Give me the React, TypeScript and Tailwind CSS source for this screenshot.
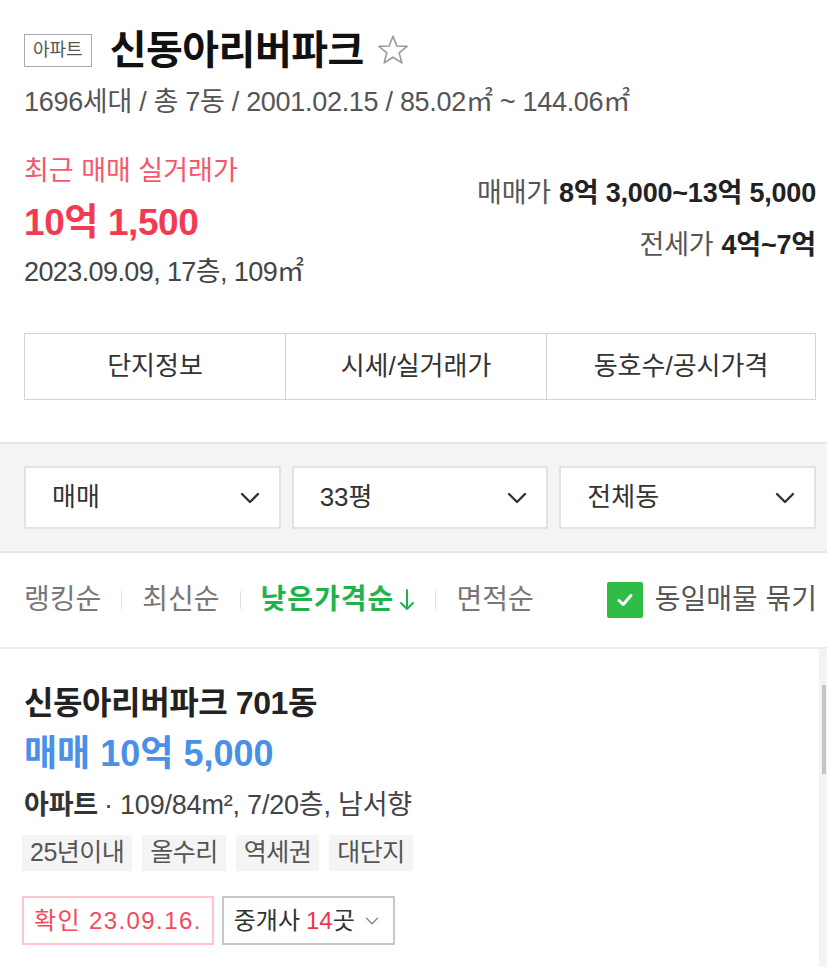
import { ChevronDown } from "lucide-react";

const FONT = "font-[family-name:'Liberation_Sans','Noto_Sans_CJK_KR',sans-serif]";

function StarIcon() {
  return (
    <svg width="36" height="36" viewBox="0 0 24 24" fill="none" stroke="#9a9a9a" strokeWidth="1.1" strokeLinejoin="round">
      <path d="M12 2.8 L14.6 9.3 L21.4 9.6 L16.1 13.9 L17.9 20.6 L12 16.8 L6.1 20.6 L7.9 13.9 L2.6 9.6 L9.4 9.3 Z" />
    </svg>
  );
}

function Chevron() {
  return (
    <svg width="22" height="14" viewBox="0 0 22 14" fill="none" stroke="#333" strokeWidth="2.4" strokeLinecap="round" strokeLinejoin="round">
      <path d="M3 3 L11 11 L19 3" />
    </svg>
  );
}

function Sep() {
  return <span className="mx-[20px] h-[18px] w-px bg-[#e0e0e0]" />;
}

const tags = ["25년이내", "올수리", "역세권", "대단지"];

export default function App() {
  return (
    <div className={`w-[827px] h-[967px] overflow-hidden bg-white text-[#333] ${FONT}`}>
      {/* Header */}
      <section className="pl-[24px] pr-[11px] pt-[30px]">
        <div className="flex h-[40px] items-center">
          <span className="flex h-[33px] items-center border border-[#a8a8a8] px-[8px] text-[18px] text-[#555]">
            아파트
          </span>
          <h1 className="ml-[18px] text-[40px] font-semibold leading-none text-[#111] tracking-[-0.5px]">신동아리버파크</h1>
          <span className="ml-[11px] flex items-center">
            <StarIcon />
          </span>
        </div>
        <div className="mt-[17px] flex h-[30px] items-center text-[27px] text-[#555] tracking-[-0.3px]">
          1696세대 / 총 7동 / 2001.02.15 / 85.02㎡ ~ 144.06㎡
        </div>

        <div className="mt-[38px] flex justify-between">
          <div className="flex flex-col">
            <div className="flex h-[32px] items-center text-[27px] text-[#f4586c]">최근 매매 실거래가</div>
            <div className="mt-[14px] flex h-[44px] items-center text-[37px] font-bold text-[#f23a52] tracking-[-0.4px]">
              10억 1,500
            </div>
            <div className="mt-[12px] flex h-[30px] items-center text-[27px] text-[#444] tracking-[-0.6px]">
              2023.09.09, 17층, 109㎡
            </div>
          </div>
          <div className="flex flex-col items-end pt-[22px] text-[27px] tracking-[-0.2px]">
            <div className="flex h-[32px] items-center">
              <span className="text-[#555]">매매가</span>
              <span className="ml-[8px] font-bold text-[#222]">8억 3,000~13억 5,000</span>
            </div>
            <div className="mt-[20px] flex h-[32px] items-center">
              <span className="text-[#555]">전세가</span>
              <span className="ml-[8px] font-bold text-[#222]">4억~7억</span>
            </div>
          </div>
        </div>

        <div className="mt-[46px] flex h-[67px] border border-[#d4d4d4] text-[26px] text-[#333]">
          <div className="flex w-[261px] items-center justify-center border-r border-[#d4d4d4]">단지정보</div>
          <div className="flex w-[261px] items-center justify-center border-r border-[#d4d4d4]">시세/실거래가</div>
          <div className="flex flex-1 items-center justify-center">동호수/공시가격</div>
        </div>
      </section>

      {/* Filters */}
      <section className="mt-[42px] border-y-2 border-[#e6e6e6] bg-[#f4f4f4] pl-[24px] pr-[11px] py-[22px]">
        <div className="grid grid-cols-3 gap-[11px]">
          {["매매", "33평", "전체동"].map((label) => (
            <div
              key={label}
              className="flex h-[63px] items-center justify-between border-2 border-[#e3e3e3] bg-white pl-[26px] pr-[18px] text-[26px] text-[#333]"
            >
              <span>{label}</span>
              <Chevron />
            </div>
          ))}
        </div>
      </section>

      {/* Sort */}
      <section className="flex h-[94px] items-center justify-between pl-[24px] pr-[10px] text-[28px]">
        <div className="flex items-center text-[#777]">
          <span>랭킹순</span>
          <Sep />
          <span>최신순</span>
          <Sep />
          <span className="flex items-center font-bold text-[#20b34a] tracking-[1px]">
            낮은가격순
            <svg className="ml-[5px]" width="16" height="24" viewBox="0 0 16 24" fill="none" stroke="#20b34a" strokeWidth="2" strokeLinecap="round" strokeLinejoin="round">
              <path d="M8 2 V21 M2 15 L8 21 L14 15" />
            </svg>
          </span>
          <Sep />
          <span>면적순</span>
        </div>
        <div className="flex items-center">
          <span className="flex h-[36px] w-[36px] items-center justify-center rounded-[2px] bg-[#2fbd48]">
            <svg width="22" height="22" viewBox="0 0 22 22" fill="none" stroke="#fff" strokeWidth="3" strokeLinecap="round" strokeLinejoin="round">
              <path d="M5 11.5 L9.2 15.5 L17 6.5" />
            </svg>
          </span>
          <span className="ml-[12px] text-[#555]">동일매물 묶기</span>
        </div>
      </section>

      {/* Listing */}
      <section className="flex h-[320px] border-t-2 border-[#ececec]">
        <div className="flex-1 pl-[24px] pt-[36px]">
          <div className="flex h-[36px] items-center text-[32px] font-bold text-[#222] tracking-[-0.4px]">
            신동아리버파크 701동
          </div>
          <div className="mt-[13px] flex h-[40px] items-center text-[36px] font-bold text-[#4a8fe8]">
            매매 10억 5,000
          </div>
          <div className="mt-[15px] flex h-[32px] items-center text-[27px] text-[#444] tracking-[-0.2px]">
            <span className="font-bold text-[#333]">아파트</span>
            <span className="ml-[6px]">· 109/84m², 7/20층, 남서향</span>
          </div>
          <div className="-ml-[2px] mt-[14px] flex gap-[10px]">
            {tags.map((t) => (
              <span key={t} className="flex h-[36px] items-center bg-[#f4f4f4] px-[8px] text-[25px] text-[#555] tracking-[-0.5px]">
                {t}
              </span>
            ))}
          </div>
          <div className="-ml-[2px] mt-[25px] flex gap-[8px]">
            <span className="flex h-[49px] items-center border-2 border-[#ffc4cc] px-[10px] text-[24px] text-[#f4485e] tracking-[1.4px]">
              확인 23.09.16.
            </span>
            <span className="flex h-[49px] items-center border-2 border-[#c8c8c8] px-[10px] text-[24px] text-[#333]">
              중개사 <span className="ml-[6px] text-[#f2334f]">14</span>곳
              <ChevronDown size={22} strokeWidth={1.6} className="ml-[6px] text-[#888]" />
            </span>
          </div>
        </div>
        <div className="w-[8px] bg-[#f3f3f3] pl-[3px] pt-[36px]">
          <div className="h-[89px] w-[4px] bg-[#c4c4c4]" />
        </div>
      </section>
    </div>
  );
}
